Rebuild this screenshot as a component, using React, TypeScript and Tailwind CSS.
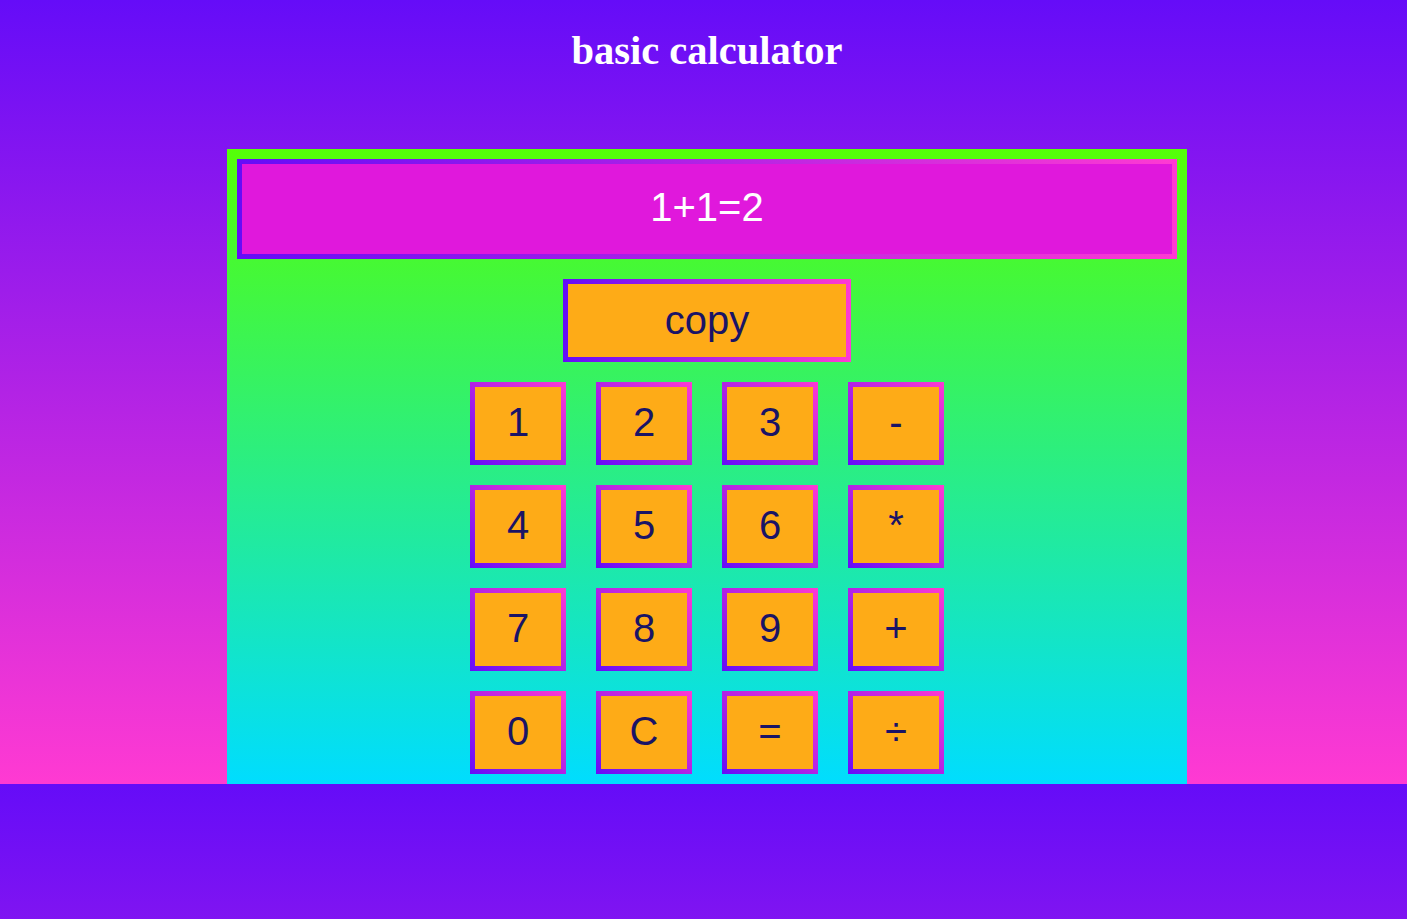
const keys = ["1", "2", "3", "-", "4", "5", "6", "*", "7", "8", "9", "+", "0", "C", "=", "÷"];

export default function App() {
  return (
    <div className="min-h-screen w-full bg-[linear-gradient(to_bottom,#650cf8,#ff3ad2)] bg-[length:100%_784px] bg-repeat-y" style={{ fontFamily: '"Liberation Sans", Arial, sans-serif' }}>
      <div className="flex flex-col items-center pl-[7px]">
        <h1 className="mt-[29px] mb-[77px] h-[43px] text-[40.5px] leading-[43px] font-bold text-white" style={{ fontFamily: '"Liberation Serif", "Times New Roman", serif' }}>
          basic calculator
        </h1>

        <div className="flex h-[635px] w-[960px] flex-col items-center bg-[linear-gradient(to_bottom,#55ff08,#00ddff)] px-[10px] pt-[10px]">
          <div className="flex h-[100px] w-full items-center justify-center bg-[linear-gradient(to_right,#650cf8,#ff3ad2)] p-[5px]">
            <div className="flex h-full w-full items-center justify-center bg-[#e018dc] pb-[4px] text-[40px] text-white">1+1=2</div>
          </div>

          <button className="mt-[20px] flex h-[83px] w-[288px] bg-[linear-gradient(to_right,#650cf8,#ff3ad2)] p-[5px]">
            <span className="flex h-full w-full items-center justify-center bg-[#feab17] pb-[2px] text-[40px] text-[#1a1466]">copy</span>
          </button>

          <div className="mt-[20px] grid grid-cols-4 gap-x-[30px] gap-y-[20px]">
            {keys.map((k) => (
              <button key={k} className="flex h-[83px] w-[96px] bg-[linear-gradient(to_top_right,#650cf8,#ff3ad2)] p-[5px]">
                <span className="flex h-full w-full items-center justify-center bg-[#feab17] pb-[4px] text-[40px] text-[#1a1466]">{k}</span>
              </button>
            ))}
          </div>
        </div>
      </div>
    </div>
  );
}
